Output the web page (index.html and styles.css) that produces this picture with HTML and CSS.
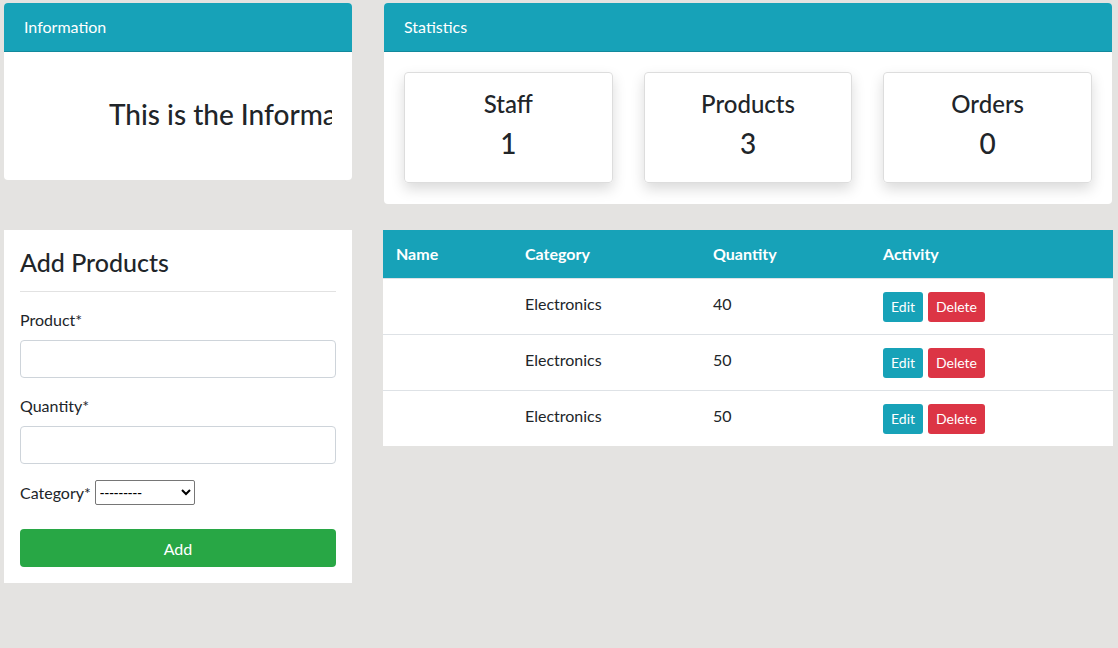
FILE: index.html
```html
<!DOCTYPE html>
<html>
<head>
<meta charset="utf-8">
<link rel="stylesheet" href="styles.css">
</head>
<body>
<div class="page">
  <section class="card info-card">
    <div class="card-header">Information</div>
    <div class="card-body info-body">
      <div class="info-clip"><h3 class="info-text">This is the Information page</h3></div>
    </div>
  </section>

  <section class="card stats-card">
    <div class="card-header">Statistics</div>
    <div class="card-body stats-body">
      <div class="stat"><div class="stat-label">Staff</div><div class="stat-value">1</div></div>
      <div class="stat"><div class="stat-label">Products</div><div class="stat-value">3</div></div>
      <div class="stat"><div class="stat-label">Orders</div><div class="stat-value">0</div></div>
    </div>
  </section>

  <section class="form-card">
    <h3 class="form-title">Add Products</h3>
    <hr class="divider">
    <form class="product-form">
      <label class="field-label">Product*</label>
      <input class="field-input" type="text">
      <label class="field-label">Quantity*</label>
      <input class="field-input" type="text">
      <div class="select-row">
        <label class="field-label inline">Category*</label>
        <select class="category-select"><option>---------</option></select>
      </div>
      <button type="button" class="btn-add">Add</button>
    </form>
  </section>

  <section class="table-wrap">
    <table class="products-table">
      <thead>
        <tr><th class="c-name">Name</th><th class="c-cat">Category</th><th class="c-qty">Quantity</th><th>Activity</th></tr>
      </thead>
      <tbody>
        <tr><td></td><td>Electronics</td><td>40</td><td><button class="btn btn-edit">Edit</button><button class="btn btn-delete">Delete</button></td></tr>
        <tr><td></td><td>Electronics</td><td>50</td><td><button class="btn btn-edit">Edit</button><button class="btn btn-delete">Delete</button></td></tr>
        <tr><td></td><td>Electronics</td><td>50</td><td><button class="btn btn-edit">Edit</button><button class="btn btn-delete">Delete</button></td></tr>
      </tbody>
    </table>
  </section>
</div>
</body>
</html>
```

FILE: styles.css
```css
* { box-sizing: border-box; }
html, body { margin: 0; padding: 0; }
body {
  background: #e4e3e1;
  font-family: "Segoe UI", Lato, "Noto Sans", sans-serif;
  font-size: 16px;
  color: #212529;
  line-height: 1.5;
}
.page {
  display: grid;
  grid-template-columns: 348px 728px;
  column-gap: 32px;
  row-gap: 26px;
  padding: 3px 0 0 4px;
  align-items: start;
}
.card {
  background: #fff;
  border-radius: 4px;
  overflow: hidden;
}
.card-header {
  background: #17a2b8;
  color: #fff;
  height: 49px;
  padding: 0 20px;
  display: flex;
  align-items: center;
  font-size: 16px;
  border-bottom: 1px solid #12899c;
}
.info-body {
  height: 128px;
  padding: 20px;
}
.info-clip {
  overflow: hidden;
  height: 100%;
}
.info-text {
  margin: 0;
  padding: 26px 0 0 85px;
  font-size: 28px;
  font-weight: 500;
  white-space: nowrap;
  line-height: 1.2;
}
.stats-body {
  display: flex;
  gap: 31px;
  padding: 20px 20px 21px 20px;
}
.stat {
  flex: 1;
  height: 111px;
  border: 1px solid #ddd;
  border-radius: 4px;
  box-shadow: 0 6px 14px rgba(0,0,0,0.15);
  text-align: center;
  padding-top: 17px;
}
.stat-label {
  font-size: 24px;
  font-weight: 500;
  line-height: 1.2;
}
.stat-value {
  font-size: 28px;
  font-weight: 500;
  line-height: 1.2;
  margin-top: 8px;
}
.form-card {
  background: #fff;
  padding: 16px 16px 16px 16px;
}
.form-title {
  margin: 0;
  font-size: 25px;
  font-weight: 500;
  line-height: 1.2;
  padding-top: 1px;
}
.divider {
  border: 0;
  border-top: 1px solid #e2e2e2;
  margin: 14px 0 16px;
}
.product-form {
  display: flex;
  flex-direction: column;
}
.field-label {
  font-size: 16px;
  margin-bottom: 8px;
}
.field-input {
  height: 38px;
  border: 1px solid #ced4da;
  border-radius: 4px;
  margin-bottom: 16px;
  font-family: inherit;
}
.select-row {
  display: flex;
  align-items: center;
  gap: 4px;
  margin-bottom: 24px;
}
.field-label.inline { margin-bottom: 0; }
.category-select {
  width: 100px;
  height: 25px;
  font-size: 14px;
  font-family: Arial, sans-serif;
  border: 1px solid #767676;
  border-radius: 2px;
  background: #fff;
  color: #000;
}
.btn-add {
  height: 38px;
  background: #28a745;
  color: #fff;
  border: 0;
  border-radius: 4px;
  font-family: inherit;
  font-size: 16px;
}
.table-wrap {
  background: #fff;
  margin: 0 -1px;
}
.products-table {
  width: 100%;
  border-collapse: collapse;
  font-size: 16px;
}
.products-table th {
  background: #17a2b8;
  color: #fff;
  text-align: left;
  font-weight: 700;
  height: 48px;
  padding: 0 12px 0 13px;
  border-bottom: 1px solid #dee2e6;
}
.products-table td {
  height: 56px;
  padding: 13px 12px 0 13px;
  vertical-align: top;
  border-top: 1px solid #dee2e6;
}
.products-table tbody tr:first-child td { border-top: 0; }
.c-name { width: 129px; }
.c-cat { width: 188px; }
.c-qty { width: 170px; }
.btn {
  height: 30px;
  border: 0;
  border-radius: 3px;
  color: #fff;
  font-family: inherit;
  font-size: 14px;
  padding: 0 8px;
  margin-top: 0;
  margin-right: 5px;
}
.btn-edit { background: #17a2b8; }
.btn-delete { background: #dc3545; }
```
